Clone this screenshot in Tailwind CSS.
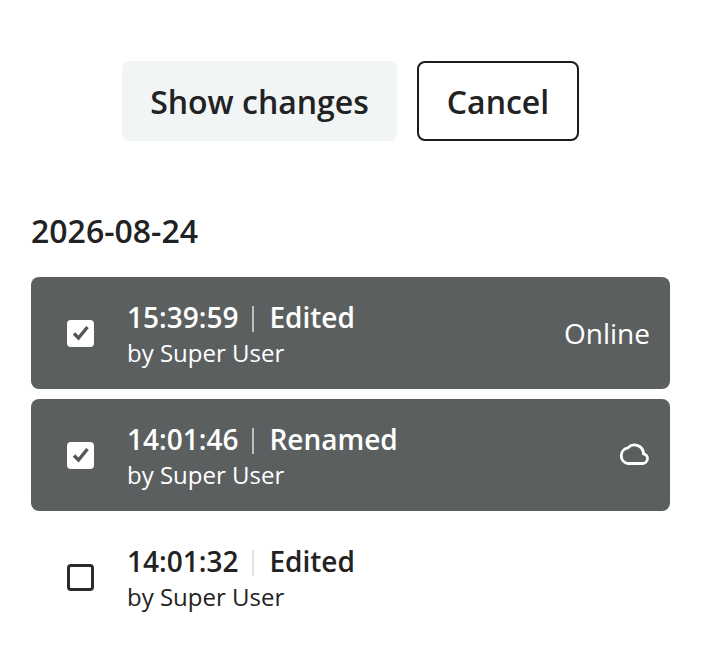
<!DOCTYPE html>
<html lang="en"><head><meta charset="utf-8"><title>Versions</title>
<script src="https://cdn.jsdelivr.net/npm/@tailwindcss/browser@4"></script></head>
<body class="bg-white font-['Open_Sans',sans-serif] text-[#222] w-[702px] h-[662px] overflow-hidden">
<div class="flex justify-center gap-5 pt-[61px] pr-[1px]">
  <button class="h-20 w-[275px] pt-[2px] rounded-lg bg-[#f1f5f6] text-[32px] font-semibold">Show changes</button>
  <button class="h-20 w-[162px] pt-[2px] rounded-lg border-2 border-[#1c1c1c] bg-white text-[32px] font-semibold">Cancel</button>
</div>
<h2 class="mt-[69px] ml-[31px] text-[32px] leading-[42px] font-semibold">2026-08-24</h2>
<ul class="mt-[25px] ml-[31px] w-[639px] flex flex-col gap-[10px]">
  <li class="h-28 rounded-lg bg-[#5c5f60] text-white flex items-center pl-[36px] pr-5">
    <span class="w-[27px] h-[27px] rounded bg-white flex items-center justify-center shrink-0"><svg width="18" height="18" viewBox="0 0 18 18" fill="none" stroke="#555" stroke-width="3.4"><path d="M2 9.5l4.5 4.5L15.5 3"/></svg></span>
    <div class="ml-[33px] flex-1 pt-[3px]"><div class="text-[28px] leading-[37px] font-semibold"><span>15:39:59</span><span class="ml-[14px] mr-[15px] inline-block w-[2px] h-[26px] align-[-4px] bg-white/60"></span><span>Edited</span></div><div class="text-[24px] leading-[34px]">by Super User</div></div>
    <span class="text-[28px]">Online</span>
  </li>
  <li class="h-28 rounded-lg bg-[#5c5f60] text-white flex items-center pl-[36px] pr-5">
    <span class="w-[27px] h-[27px] rounded bg-white flex items-center justify-center shrink-0"><svg width="18" height="18" viewBox="0 0 18 18" fill="none" stroke="#555" stroke-width="3.4"><path d="M2 9.5l4.5 4.5L15.5 3"/></svg></span>
    <div class="ml-[33px] flex-1 pt-[3px]"><div class="text-[28px] leading-[37px] font-semibold"><span>14:01:46</span><span class="ml-[14px] mr-[15px] inline-block w-[2px] h-[26px] align-[-4px] bg-white/60"></span><span>Renamed</span></div><div class="text-[24px] leading-[34px]">by Super User</div></div>
    <svg width="30" height="24" viewBox="0 0 30 24" fill="none" stroke="#fff" stroke-width="2.8" class="relative left-[-1px] top-[-1px]"><path d="M8.5 21.5H23.5a4.9 4.9 0 0 0 1-9.7A9 9 0 0 0 9 5.8A8 8 0 0 0 8.5 21.5z"/></svg>
  </li>
  <li class="h-28 flex items-center pl-[36px] pr-5">
    <span class="w-[27px] h-[27px] rounded border-[3px] border-[#2b2b2b] shrink-0"></span>
    <div class="ml-[33px] flex-1 pt-[3px]"><div class="text-[28px] leading-[37px] font-semibold"><span>14:01:32</span><span class="ml-[14px] mr-[15px] inline-block w-[2px] h-[26px] align-[-4px] bg-[#dfe3e5]"></span><span>Edited</span></div><div class="text-[24px] leading-[34px]">by Super User</div></div>
  </li>
</ul>
</body></html>
